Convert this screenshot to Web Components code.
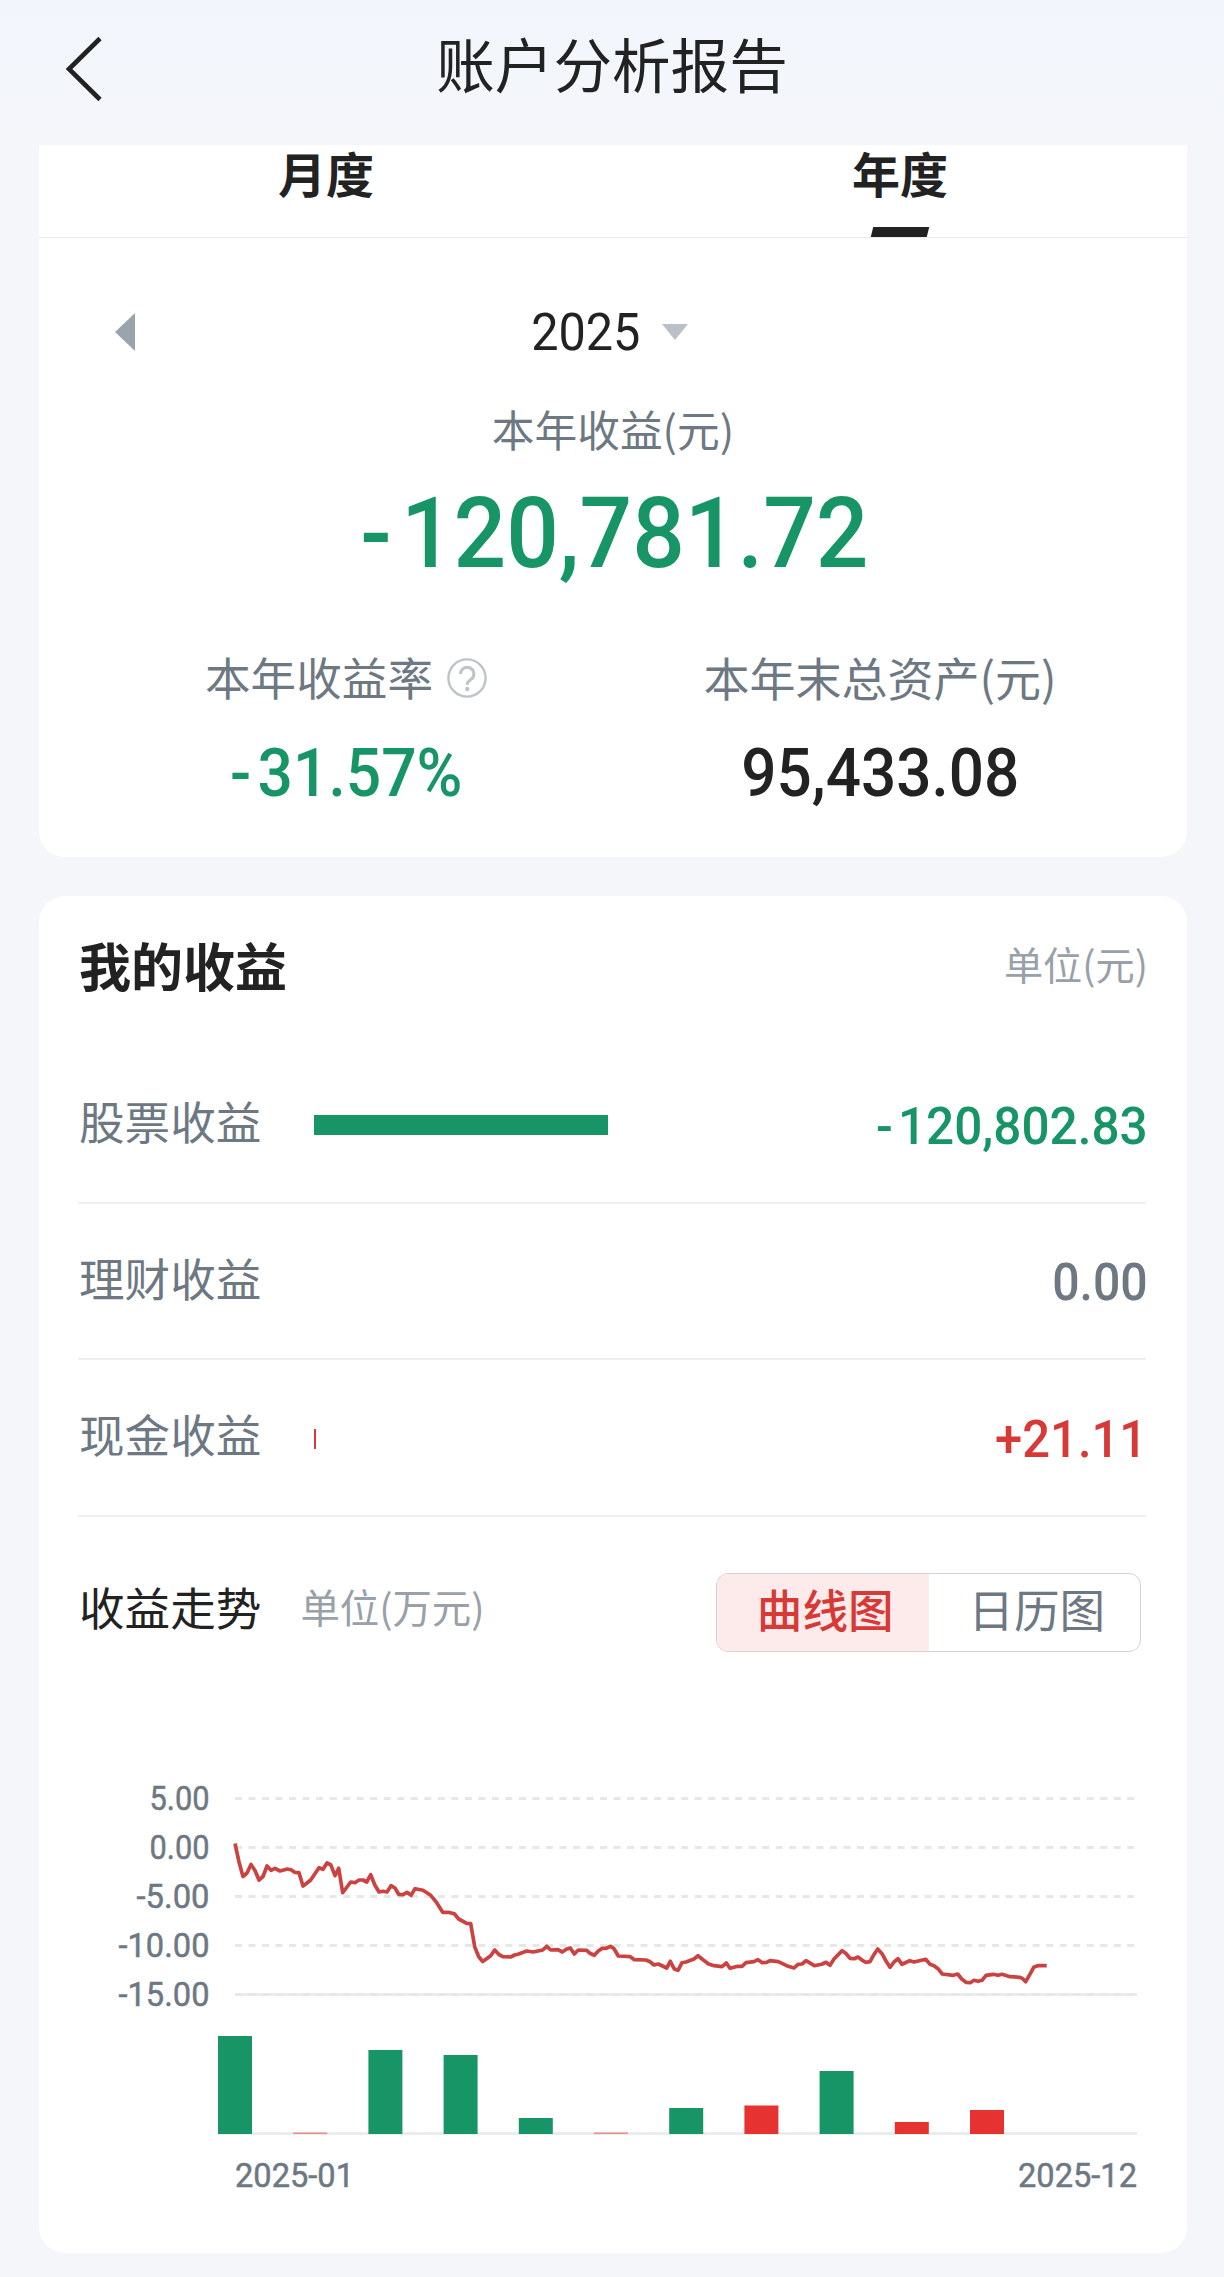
<!DOCTYPE html>
<html lang="zh-CN">
<head>
<meta charset="utf-8">
<title>账户分析报告</title>
<style>
    html {
        --ink: #222;
        --label: #6d7883;
        --muted: #98a1a9;
        --down: #189566;
        --up: #d63a37;
        --line: #eeefef;
    }

    body {
        margin: 0;
        background: linear-gradient(#f2f6fc, #f4f6fa 140px);
        color: var(--ink);
        font-family: "Noto Sans CJK SC", sans-serif;
    }
</style>
</head>
<body>

<report-page>
    <nav-bar slot="nav">账户分析报告</nav-bar>

    <report-card flat>
        <tab-bar>
            <tab-item>月度</tab-item>
            <tab-item active>年度</tab-item>
        </tab-bar>
        <year-picker year="2025"></year-picker>
        <year-summary></year-summary>
    </report-card>

    <report-card>
        <card-title unit="单位(元)">我的收益</card-title>
        <profit-row label="股票收益" bar="294" width="267" kind="down" inset="1">-120,802.83</profit-row>
        <profit-row label="理财收益" width="92">0.00</profit-row>
        <profit-row label="现金收益" bar="2" width="142" kind="up" inset="8">+21.11</profit-row>
        <trend-head></trend-head>
        <trend-chart></trend-chart>
    </report-card>
</report-page>

<script>

const NUM_FONT = 'Roboto, "Noto Sans CJK SC", sans-serif';

// extra room after a minus sign, in em
const MINUS_GAP = 0.1;

const measure = document.createElement("canvas").getContext("2d");


class ReportPage extends HTMLElement {

    constructor() {
        super();
        this.attachShadow({mode: "open"});
        this.shadowRoot.innerHTML = `
            <style>
                :host {
                    display: block;
                    box-sizing: border-box;
                    height: 2277px;
                    overflow: hidden;
                }

                main {
                    display: flex;
                    flex-direction: column;
                    gap: 39px;
                    padding: 0 37px 24px 39px;
                }
            </style>

            <slot name="nav"></slot>
            <main><slot></slot></main>
        `;
    }
}


class NavBar extends HTMLElement {

    constructor() {
        super();
        this.attachShadow({mode: "open"});
        this.shadowRoot.innerHTML = `
            <style>
                :host {
                    display: grid;
                    grid-template-columns: 170px 1fr 170px;
                    align-items: center;
                    height: 145px;
                    box-sizing: border-box;
                    padding-bottom: 7px;
                    font-size: 58.6px;
                    line-height: 80px;
                    text-align: center;
                }

                svg {
                    margin-left: 63px;
                }

                span {
                    margin-top: -12px;
                }
            </style>

            <svg width="42" height="66" viewBox="0 0 42 66" fill="none" stroke="#222" stroke-width="4.600">
                <path d="M37 2.500L6 33L37 63.500"/>
            </svg>
            <span><slot></slot></span>
        `;
    }
}


class ReportCard extends HTMLElement {

    constructor() {
        super();
        this.attachShadow({mode: "open"});
        this.shadowRoot.innerHTML = `
            <style>
                :host {
                    display: block;
                    box-sizing: border-box;
                    height: 1357px;
                    border-radius: 26px;
                    background: #fff;
                }

                :host([flat]) {
                    height: 712px;
                    border-radius: 0 0 26px 26px;
                }
            </style>

            <slot></slot>
        `;
    }
}


class TabBar extends HTMLElement {

    constructor() {
        super();
        this.attachShadow({mode: "open"});
        this.shadowRoot.innerHTML = `
            <style>
                :host {
                    display: flex;
                    height: 92px;
                    border-bottom: 1px solid #e8e9ea;
                }
            </style>

            <slot></slot>
        `;
    }
}


class TabItem extends HTMLElement {

    constructor() {
        super();
        this.attachShadow({mode: "open"});
        this.shadowRoot.innerHTML = `
            <style>
                :host {
                    flex: 1;
                    display: flex;
                    flex-direction: column;
                    justify-content: space-between;
                    align-items: center;
                    font-size: 48px;
                    font-weight: 700;
                    line-height: 54px;
                }

                i {
                    display: none;
                    width: 56px;
                    height: 10px;
                    background: var(--ink);
                    transform: skewX(-14deg);
                }

                :host([active]) i {
                    display: block;
                }
            </style>

            <span><slot></slot></span>
            <i></i>
        `;
    }
}


/* A figure drawn at a fixed ink width: <fit-number size="66" width="227">1.00</fit-number> */
class FitNumber extends HTMLElement {

    constructor() {
        super();
        this.attachShadow({mode: "open"});
    }

    connectedCallback() {

        const size = this.getAttribute("size");
        const width = Number(this.getAttribute("width"));
        const weight = this.getAttribute("weight") || 500;
        const text = this.textContent.trim();
        const minus = text.startsWith("-");

        measure.font = `${weight} ${size}px Roboto`;
        const box = measure.measureText(text);
        const left = box.actualBoundingBoxLeft;
        const gap = minus ? MINUS_GAP * size : 0;
        const scale = width / (box.actualBoundingBoxRight + left + gap);

        this.shadowRoot.innerHTML = `
            <style>
                :host {
                    display: block;
                    width: ${width}px;
                    font: ${weight} ${size}px/1 ${NUM_FONT};
                    white-space: nowrap;
                }

                span {
                    display: inline-block;
                    transform-origin: 0 0;
                    transform: scaleX(${scale}) translateX(${left}px);
                }

                b {
                    font-weight: inherit;
                    letter-spacing: ${MINUS_GAP}em;
                }
            </style>

            <span>${minus ? `<b>-</b>${text.slice(1)}` : text}</span>
        `;
    }
}


class YearPicker extends HTMLElement {

    constructor() {
        super();
        this.attachShadow({mode: "open"});
    }

    connectedCallback() {
        this.shadowRoot.innerHTML = `
            <style>
                :host {
                    display: grid;
                    grid-template-columns: 418px auto 1fr;
                    align-items: center;
                    height: 54px;
                    padding: 67px 76px 0;
                }

                .down {
                    margin-left: 23px;
                }
            </style>

            <svg width="20" height="38" viewBox="0 0 20 38"><path fill="#9aa4ac" d="M20 0V38L0 19z"/></svg>
            <fit-number size="52.500" width="106" weight="400">${this.getAttribute("year")}</fit-number>
            <svg class="down" width="26" height="16" viewBox="0 0 26 16"><path fill="#b9c0c6" d="M0 0H26L13 16z"/></svg>
        `;
    }
}


class YearSummary extends HTMLElement {

    constructor() {
        super();
        this.attachShadow({mode: "open"});
        this.shadowRoot.innerHTML = `
            <style>
                :host {
                    display: flex;
                    flex-direction: column;
                    align-items: center;
                    color: var(--label);
                }

                .total {
                    margin-top: 39px;
                    font-size: 42.700px;
                    line-height: 60px;
                }

                .big {
                    margin-top: 27px;
                    margin-left: 2px;
                    color: var(--down);
                }

                .pair {
                    display: flex;
                    align-self: stretch;
                    margin-top: 61px;
                }

                .pair > div {
                    display: flex;
                    flex-direction: column;
                    align-items: center;
                    width: 614px;
                    gap: 33px;
                }

                .pair > div:last-child {
                    width: 454px;
                }

                .name {
                    display: flex;
                    align-items: center;
                    gap: 14px;
                    font-size: 45.600px;
                    line-height: 64px;
                    white-space: nowrap;
                }

                .name svg {
                    margin-top: 3px;
                }
            </style>

            <div class="total">本年收益(元)</div>
            <fit-number class="big" size="98" width="502">-120,781.72</fit-number>
            <div class="pair">
                <div>
                    <div class="name">
                        本年收益率
                        <svg width="40" height="40" viewBox="0 0 40 40" fill="none" stroke="#bfc4c9" stroke-width="2.400">
                            <circle cx="20" cy="20" r="18.600"/>
                            <path stroke-width="3" d="M13.500 16a6.700 6.700 0 1 1 10.300 5.600c-2.600 1.700-3.600 2.600-3.600 5.200"/>
                            <circle cx="20.200" cy="31" r="2.200" fill="#bfc4c9" stroke="none"/>
                        </svg>
                    </div>
                    <fit-number size="66" width="228" style="color:var(--down)">-31.57%</fit-number>
                </div>
                <div>
                    <div class="name" style="font-size:46px">本年末总资产(元)</div>
                    <fit-number size="66" width="273" style="color:var(--ink)">95,433.08</fit-number>
                </div>
            </div>
        `;
    }
}


class CardTitle extends HTMLElement {

    constructor() {
        super();
        this.attachShadow({mode: "open"});
    }

    connectedCallback() {
        this.shadowRoot.innerHTML = `
            <style>
                :host {
                    display: flex;
                    justify-content: space-between;
                    align-items: center;
                    height: 151px;
                    box-sizing: border-box;
                    padding: 0 39px 14px 40px;
                    font-size: 52px;
                    line-height: 70px;
                    font-weight: 700;
                }

                small {
                    margin-top: -3px;
                    font-size: 39.200px;
                    font-weight: 400;
                    color: var(--muted);
                }
            </style>

            <span><slot></slot></span>
            <small>${this.getAttribute("unit")}</small>
        `;
    }
}


class ProfitRow extends HTMLElement {

    constructor() {
        super();
        this.attachShadow({mode: "open"});
    }

    connectedCallback() {

        const kind = this.getAttribute("kind");
        const color = kind ? `var(--${kind})` : "var(--label)";

        this.shadowRoot.innerHTML = `
            <style>
                :host {
                    display: grid;
                    grid-template-columns: 236px 1fr auto;
                    align-items: center;
                    height: 156.700px;
                    box-sizing: border-box;
                    margin: 0 41px 0 39px;
                    border-bottom: 2px solid var(--line);
                    font-size: 45.600px;
                    line-height: 64px;
                    color: var(--label);
                }

                span {
                    margin: -9px 0 0 1px;
                }

                i {
                    height: 20px;
                    width: ${this.getAttribute("bar") || 0}px;
                    margin-top: 2px;
                    background: ${color};
                }

                fit-number {
                    margin-right: ${this.getAttribute("inset") || 0}px;
                    margin-top: 3px;
                    color: ${color};
                }
            </style>

            <span>${this.getAttribute("label")}</span>
            <i></i>
            <fit-number size="52.500" width="${this.getAttribute("width")}">${this.textContent}</fit-number>
        `;
    }
}


class TrendHead extends HTMLElement {

    constructor() {
        super();
        this.attachShadow({mode: "open"});
        this.shadowRoot.innerHTML = `
            <style>
                :host {
                    display: flex;
                    align-items: center;
                    height: 79px;
                    margin: 56px 46px 0 40px;
                    font-size: 45.600px;
                    line-height: 64px;
                }

                .name,
                small {
                    margin-top: -13px;
                }

                small {
                    flex: 1;
                    margin-left: 39px;
                    font-size: 39.400px;
                    color: var(--muted);
                }

                .switch {
                    display: flex;
                    box-sizing: border-box;
                    width: 425px;
                    height: 79px;
                    border: 1px solid #d0d2d4;
                    border-radius: 12px;
                    overflow: hidden;
                    text-align: center;
                    line-height: 68px;
                    color: var(--label);
                }

                .switch span {
                    flex: 1;
                    padding-left: 5px;
                }

                .switch .on {
                    background: #fdebeb;
                    color: var(--up);
                    font-weight: 500;
                }
            </style>

            <span class="name">收益走势</span>
            <small>单位(万元)</small>
            <div class="switch">
                <span class="on">曲线图</span>
                <span>日历图</span>
            </div>
        `;
    }
}


const AXIS = [["5.00", 60], ["0.00", 60], ["-5.00", 73], ["-10.00", 91], ["-15.00", 91]];

// top of each month's bar, and its colour
const MONTHS = [
    [2036, "g"], [2132.5, "r"], [2050, "g"], [2055, "g"], [2118, "g"], [2132.5, "r"],
    [2108, "g"], [2105.5, "r"], [2071, "g"], [2122, "r"], [2110, "r"]
];

const CURVE = `
    235,1843.5 239,1862 243,1876.5 247,1873 251,1864.5 255,1870.5 259,1880 263,1876.5 267,1866 271,1870.3
    275,1868.3 280,1871 287.3,1869 291,1869.7 295,1872.5 299,1872.7 303,1886 306.7,1883.3 310.7,1880
    319,1867.7 323,1869.3 327,1863 330.7,1864.7 335,1875.7 338.7,1868.3 342.7,1892.7 347,1887 350.7,1882
    355,1882.7 359,1880 363,1880 366.7,1882 370.7,1874.7 374.7,1884.7 379,1892 383,1891.3 387,1892
    391,1885.7 395,1888 398.7,1894.3 403,1894.7 407,1892.3 411,1895.3 415,1888.7 423,1890.3 430.7,1895.3
    436.7,1902.7 442.7,1912.3 448.3,1912.3 454.3,1913.7 458.7,1919 466.7,1923.3 470.7,1923.7 474.7,1946.7
    478.7,1956.7 482.7,1961.5 490.7,1955.7 494.7,1950 498.7,1954.3 502.7,1956.7 510.7,1957 514.7,1955
    518.7,1954 526.7,1951 533.3,1952 542.7,1950 546.7,1946.3 550.7,1950 558,1949.7 562.3,1952 566.3,1949.3
    570.3,1948 574.3,1954 578.3,1950 586.7,1950.3 590,1953.3 594.3,1955.3 598.3,1951 602.3,1948.3
    606.3,1948.3 610.7,1946.3 614,1948.7 618.3,1956 630.3,1956.7 634.3,1959.7 646,1960 650,1961.7 654,1965
    658.3,1964 666.7,1968 670.3,1961.3 674.3,1969 678,1970.3 682,1962.7 686,1962 694,1959 698,1955.7
    703.3,1960 708.7,1964 714,1965.7 722,1966.7 726.3,1963 730,1968.3 737.7,1966.3 742,1966.3 746,1962.7
    754,1961.7 758,1959.7 762.3,1962.7 766.7,1962.3 770,1960.7 778.3,1961.7 786.7,1965.7 794,1968
    798,1964.3 802,1964 806,1960.7 814.3,1965.7 821.7,1964.3 826,1962.3 830,1965.3 834,1959 842,1950.7
    845.7,1953.3 850,1958.3 854.3,1958.7 858,1957 862.3,1960.3 866,1962.3 870,1961.7 873.7,1955 877.7,1949
    882,1953.7 886,1961 890,1967.3 894,1962 898,1958.7 902,1964.3 909.7,1960.7 914,1962 925.7,1959.3
    930,1964.3 934,1965.7 938,1968.7 942.3,1974 953.3,1975.3 957.7,1974 961.7,1979 966,1982.3 970.3,1982.7
    974,1980.3 978,1981.3 982,1980.3 986,1975.3 993.3,1974.3 998,1975.3 1002,1974.3 1010,1976.7
    1020,1977.3 1022.7,1978.7 1025.7,1981.7 1029.7,1974.7 1033.7,1967.3 1037.7,1965.7 1046.7,1965.7`;


class TrendChart extends HTMLElement {

    constructor() {
        super();
        this.attachShadow({mode: "open"});

        const labels = AXIS.map(([text, width], i) =>
            `<text x="${209.5 - width}" y="${1810 + i * 49}" textLength="${width}" lengthAdjust="spacingAndGlyphs">${text}</text>`);

        const grid = AXIS.map((_, i) =>
            `<path class="dash" d="M235 ${1798.4 + i * 49}H1134"/>`);

        const bars = MONTHS.map(([top, kind], i) =>
            `<rect class="${kind}" x="${218 + i * 75.2}" y="${top}" width="34" height="${2134 - top}" opacity="${top > 2130 ? 0.5 : 1}"/>`);

        this.shadowRoot.innerHTML = `
            <style>
                :host {
                    display: block;
                    margin: 108px 41px 0 39px;
                }

                svg {
                    display: block;
                }

                text {
                    font: 400 33px ${NUM_FONT};
                    fill: var(--label);
                    stroke: var(--label);
                    stroke-width: .5px;
                }

                path {
                    stroke: #ebecec;
                    stroke-width: 3;
                }

                .dash {
                    stroke: #e6e7e7;
                    stroke-dasharray: 7 6.520;
                }

                polyline {
                    fill: none;
                    stroke: #cb4341;
                    stroke-width: 3.700;
                    stroke-linejoin: round;
                }

                .g { fill: var(--down); }
                .r { fill: #e63331; }
            </style>

            <svg width="1068" height="450" viewBox="78 1760 1068 450">
                ${labels.join("")}
                <path d="M235 1994.400H1137M218 2133.500H1137"/>
                ${grid.join("")}
                <polyline points="${CURVE}"/>
                ${bars.join("")}
                <text x="235" y="2187" textLength="119" lengthAdjust="spacingAndGlyphs">2025-01</text>
                <text x="1018" y="2187" textLength="119" lengthAdjust="spacingAndGlyphs">2025-12</text>
            </svg>
        `;
    }
}


customElements.define("fit-number", FitNumber);
customElements.define("report-page", ReportPage);
customElements.define("nav-bar", NavBar);
customElements.define("report-card", ReportCard);
customElements.define("tab-bar", TabBar);
customElements.define("tab-item", TabItem);
customElements.define("year-picker", YearPicker);
customElements.define("year-summary", YearSummary);
customElements.define("card-title", CardTitle);
customElements.define("profit-row", ProfitRow);
customElements.define("trend-head", TrendHead);
customElements.define("trend-chart", TrendChart);

</script>
</body>
</html>
